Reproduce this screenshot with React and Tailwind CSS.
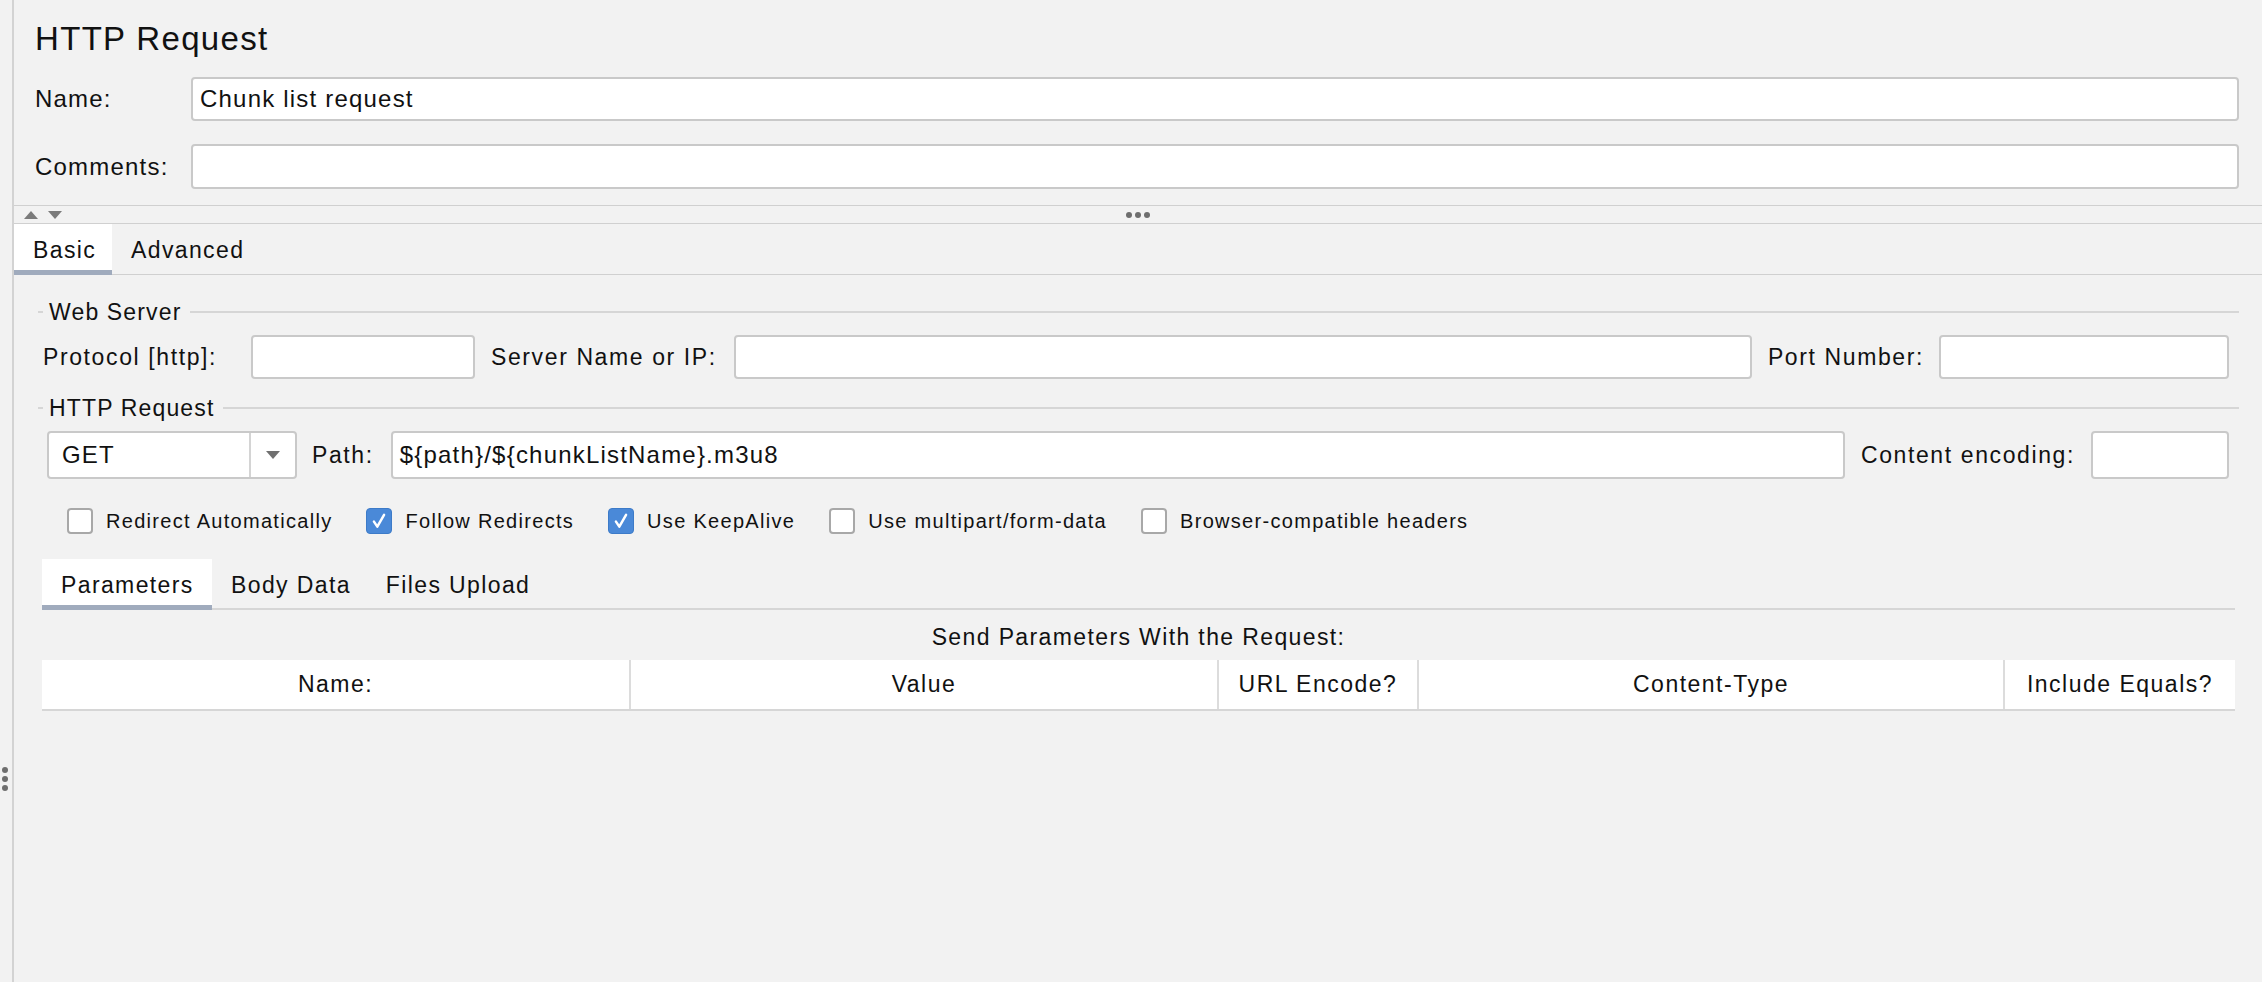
import React from 'react';

const Input = ({ value = '', className = '' }) => (
  <div className={`h-[44px] bg-white border-2 border-[#c9c9c9] rounded-[4px] flex items-center pl-[7px] text-[24px] tracking-[0.05em] ${className}`}>
    {value}
  </div>
);

const Legend = ({ title, className = '' }) => (
  <div className={`flex items-center h-[26px] ${className}`}>
    <div className="w-[5px] h-[2px] bg-[#d6d6d6]" />
    <span className="ml-[6px] text-[23px] tracking-[0.05em] leading-none">{title}</span>
    <div className="flex-1 h-[2px] bg-[#d6d6d6] ml-[8px]" />
  </div>
);

const Check = ({ label, checked }) => (
  <div className="flex items-center mr-[34px]">
    {checked ? (
      <div className="w-[26px] h-[26px] rounded-[4px] bg-[#4a89d8] border border-[#3d7bc8] flex items-center justify-center">
        <svg width="18" height="18" viewBox="0 0 16 16">
          <path d="M3.5 8.5 L6.5 13 L12.5 2.5" fill="none" stroke="white" strokeWidth="2.2" strokeLinecap="round" strokeLinejoin="round" />
        </svg>
      </div>
    ) : (
      <div className="w-[26px] h-[26px] rounded-[4px] bg-white border-2 border-[#a8a8a8]" />
    )}
    <span className="ml-[13px] text-[20px] tracking-[0.065em]">{label}</span>
  </div>
);

const Tab = ({ label, active, width }) => (
  <div
    className={`h-[51px] -mb-px flex items-center pl-[19px] pt-[6px] text-[23px] tracking-[0.06em] ${
      active ? 'bg-white border-b-[5px] border-[#a0abbd]' : 'border-b-[5px] border-transparent pr-[16px]'
    }`}
    style={width ? { width } : undefined}
  >
    {label}
  </div>
);

export default function App() {
  return (
    <div className="flex w-full h-screen min-h-[982px] overflow-hidden bg-[#f2f2f2] text-[#111] font-['Liberation_Sans',Arial,sans-serif]">
      {/* left splitter handle */}
      <div className="w-[12px] shrink-0 flex flex-col items-start pl-[1.5px] pt-[767px] gap-[3px]">
        <div className="w-[6px] h-[6px] rounded-full bg-[#6e6e6e]" />
        <div className="w-[6px] h-[6px] rounded-full bg-[#6e6e6e]" />
        <div className="w-[6px] h-[6px] rounded-full bg-[#6e6e6e]" />
      </div>
      <div className="w-[2px] shrink-0 bg-[#d3d3d3]" />

      <div className="flex-1 flex flex-col min-w-0">
        {/* top section */}
        <div className="pl-[21px] pr-[23px] pt-[19px]">
          <div className="text-[33px] leading-[40px] tracking-[0.04em]">HTTP Request</div>
          <div className="flex items-center mt-[18px]">
            <div className="w-[156px] text-[24px] tracking-[0.05em]">Name:</div>
            <Input value="Chunk list request" className="flex-1" />
          </div>
          <div className="flex items-center mt-[23px]">
            <div className="w-[156px] text-[24px] tracking-[0.05em]">Comments:</div>
            <Input className="flex-1 h-[45px]" />
          </div>
        </div>

        {/* split bar */}
        <div className="mt-[16px] h-[19px] border-y border-[#d0d0d0] grid grid-cols-[1fr_auto_1fr] items-center">
          <div className="flex items-center pl-[10px] gap-[10px]">
            <svg width="14" height="8" viewBox="0 0 14 8"><path d="M7 0 L14 8 L0 8 Z" fill="#7b7b7b" /></svg>
            <svg width="14" height="8" viewBox="0 0 14 8"><path d="M0 0 L14 0 L7 8 Z" fill="#7b7b7b" /></svg>
          </div>
          <div className="flex gap-[3px]">
            <div className="w-[6px] h-[6px] rounded-full bg-[#6e6e6e]" />
            <div className="w-[6px] h-[6px] rounded-full bg-[#6e6e6e]" />
            <div className="w-[6px] h-[6px] rounded-full bg-[#6e6e6e]" />
          </div>
          <div />
        </div>

        {/* tabs */}
        <div className="flex border-b border-[#d0d0d0] h-[51px]">
          <Tab label="Basic" active width={98} />
          <Tab label="Advanced" />
        </div>

        {/* basic panel */}
        <div className="pl-[24px] pr-[23px]">
          <Legend title="Web Server" className="mt-[24px]" />
          <div className="flex items-center mt-[10px] pl-[5px] pr-[10px] text-[23px] tracking-[0.07em]">
            <span className="w-[208px] shrink-0 whitespace-nowrap">Protocol [http]:</span>
            <Input className="w-[224px] shrink-0" />
            <span className="ml-[16px]">Server Name or IP:</span>
            <Input className="flex-1 ml-[17px]" />
            <span className="ml-[16px]">Port Number:</span>
            <Input className="w-[290px] ml-[15px]" />
          </div>

          <Legend title="HTTP Request" className="mt-[16px]" />
          <div className="flex items-center mt-[10px] pl-[9px] pr-[10px] text-[23px] tracking-[0.07em]">
            <div className="w-[250px] h-[48px] bg-white border-2 border-[#c9c9c9] rounded-[4px] flex">
              <div className="flex-1 flex items-center pl-[13px] text-[24px] tracking-[0.05em]">GET</div>
              <div className="w-[46px] border-l-2 border-[#d4d4d4] flex items-center justify-center">
                <svg width="14" height="8" viewBox="0 0 14 8"><path d="M0 0 L14 0 L7 8 Z" fill="#707070" /></svg>
              </div>
            </div>
            <span className="ml-[15px]">Path:</span>
            <Input value="${path}/${chunkListName}.m3u8" className="flex-1 ml-[17px] h-[48px]" />
            <span className="ml-[16px]">Content encoding:</span>
            <Input className="w-[138px] ml-[16px] h-[48px]" />
          </div>

          <div className="flex items-center mt-[27px] pl-[29px]">
            <Check label="Redirect Automatically" />
            <Check label="Follow Redirects" checked />
            <Check label="Use KeepAlive" checked />
            <Check label="Use multipart/form-data" />
            <Check label="Browser-compatible headers" />
          </div>

          {/* sub tabs */}
          <div className="mt-[23px] px-[4px]">
            <div className="flex border-b-2 border-[#d6d6d6] h-[51px]">
              <Tab label="Parameters" active width={170} />
              <Tab label="Body Data" />
              <Tab label="Files Upload" />
            </div>
            <div className="mt-[14px] h-[26px] flex items-center justify-center text-[23px] tracking-[0.06em]">
              Send Parameters With the Request:
            </div>
            <div className="mt-[10px] h-[51px] bg-white border-b-2 border-[#d6d6d6] grid grid-cols-[587px_588px_200px_586px_1fr] text-[23px] tracking-[0.065em]">
              <div className="flex items-center justify-center">Name:</div>
              <div className="flex items-center justify-center border-l-2 border-[#dcdcdc]">Value</div>
              <div className="flex items-center justify-center border-l-2 border-[#dcdcdc]">URL Encode?</div>
              <div className="flex items-center justify-center border-l-2 border-[#dcdcdc]">Content-Type</div>
              <div className="flex items-center justify-center border-l-2 border-[#dcdcdc]">Include Equals?</div>
            </div>
          </div>
        </div>
      </div>
    </div>
  );
}
